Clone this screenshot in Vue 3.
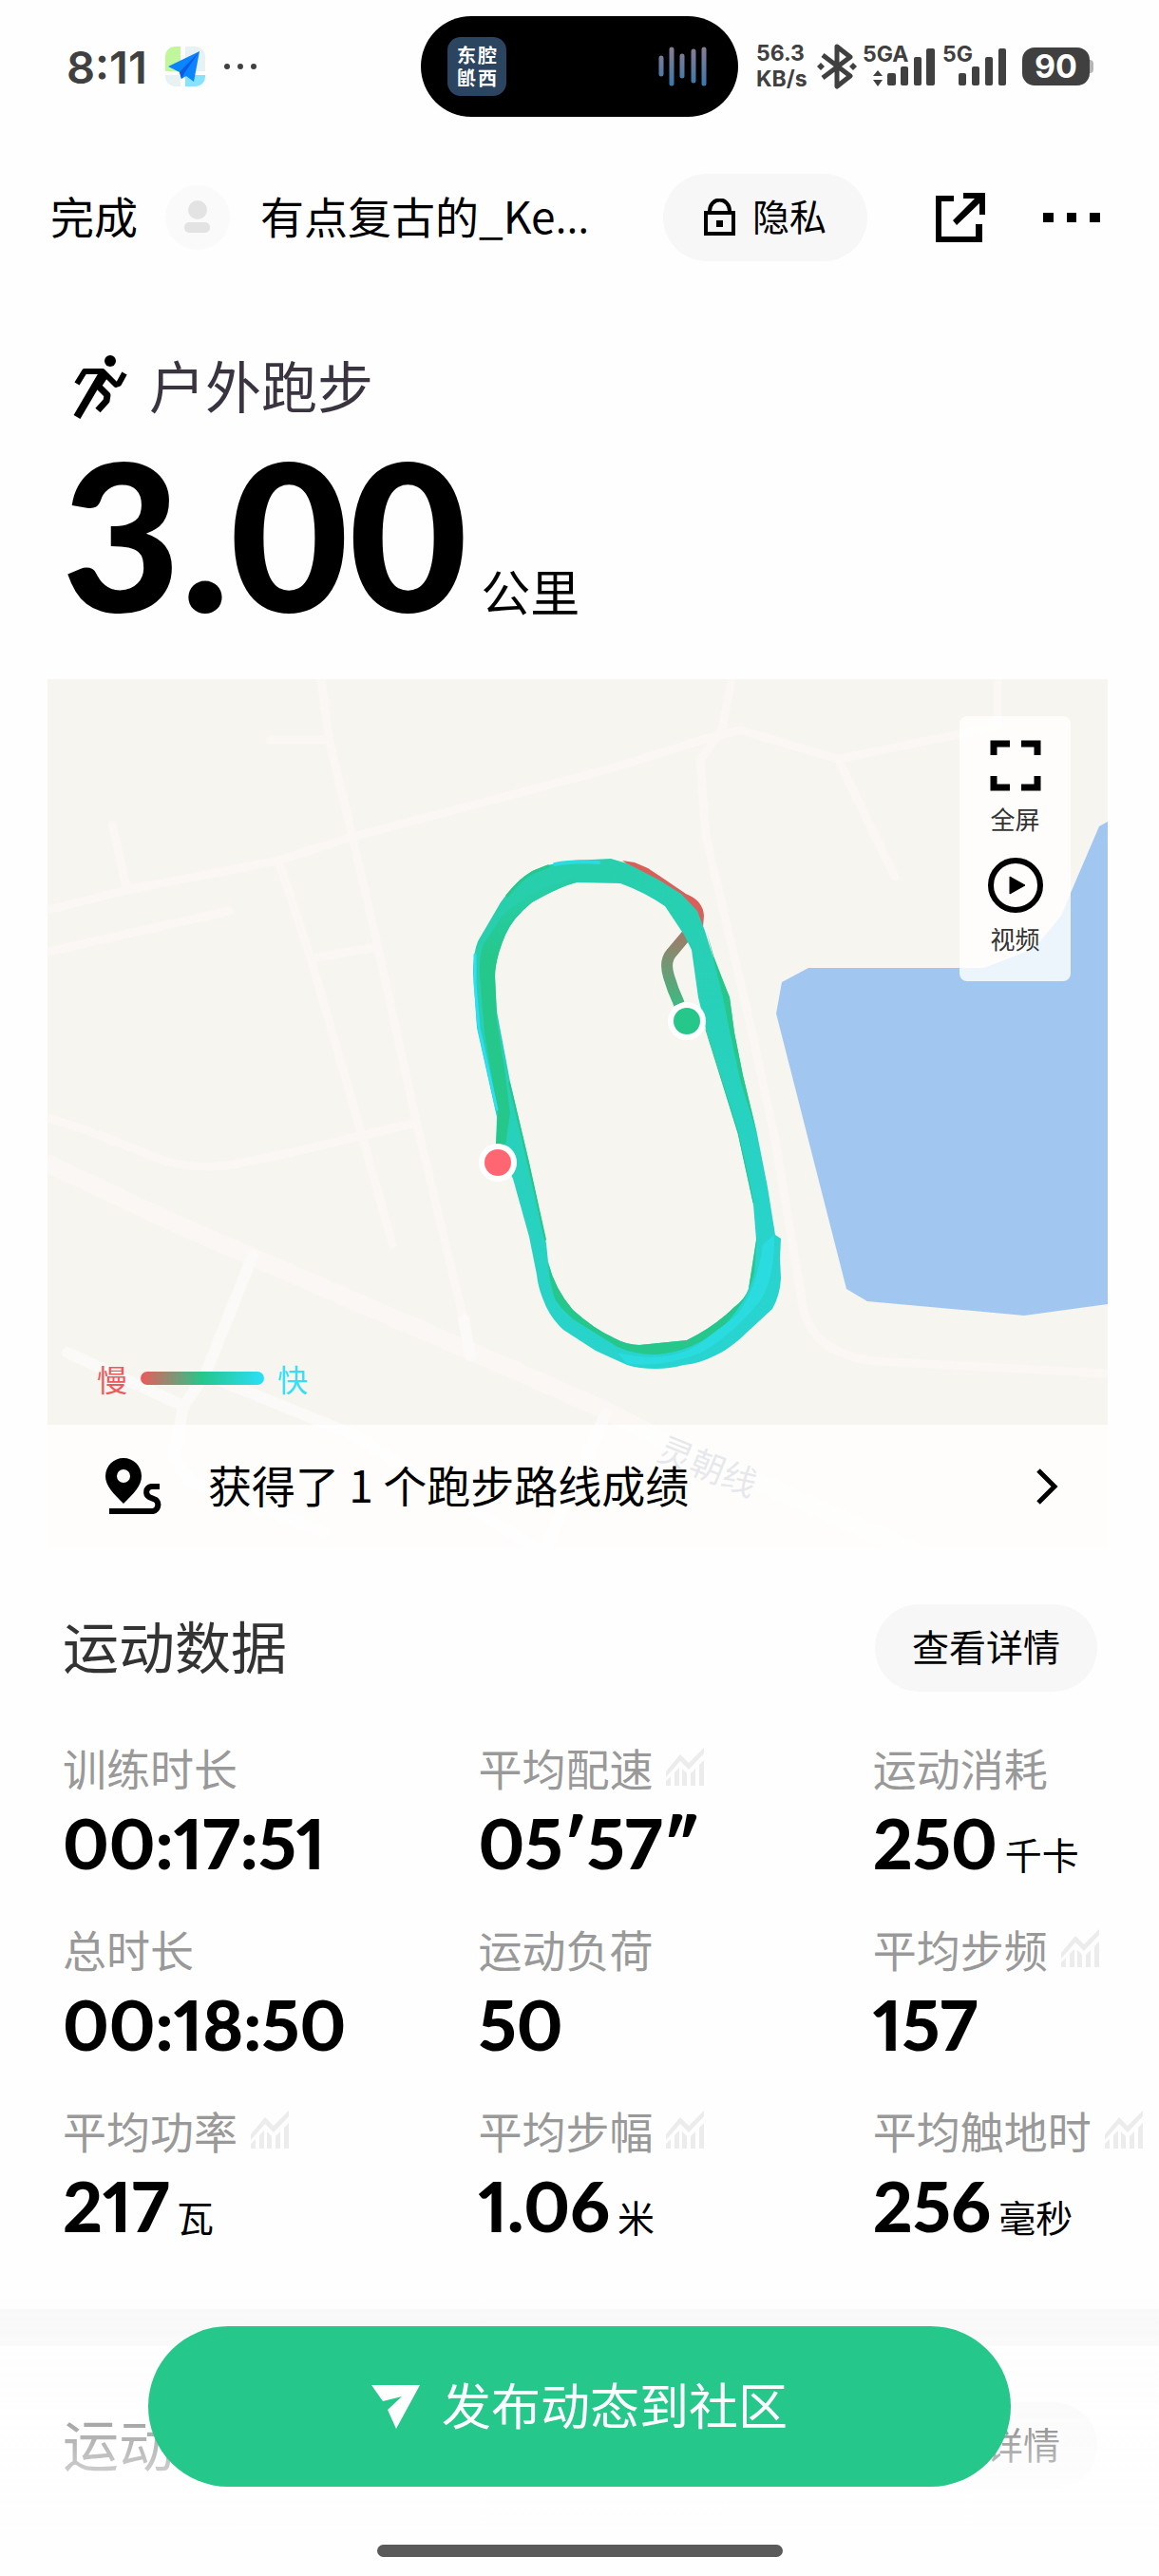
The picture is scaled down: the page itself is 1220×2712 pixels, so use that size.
<script setup>
const metrics = [
  { label: '训练时长', value: '00:17:51' },
  { label: '平均配速', value: '05′57″', chart: true },
  { label: '运动消耗', value: '250', unit: '千卡' },
  { label: '总时长', value: '00:18:50' },
  { label: '运动负荷', value: '50' },
  { label: '平均步频', value: '157', chart: true },
  { label: '平均功率', value: '217', unit: '瓦', chart: true },
  { label: '平均步幅', value: '1.06', unit: '米', chart: true },
  { label: '平均触地时', value: '256', unit: '毫秒', chart: true },
]
</script>

<template>
  <div class="page">
    <div class="status">
      <div class="status-left">
        <span class="clock">8:11</span>
        <svg class="map-app" viewBox="0 0 42 42" aria-hidden="true">
          <path d="M10 0H16V26H0V10A10 10 0 0 1 10 0Z" fill="#bff79a" />
          <path d="M21 0H32A10 10 0 0 1 42 10V26H21Z" fill="#e9f2f2" />
          <path d="M0 30H16V42H10A10 10 0 0 1 0 32Z" fill="#e9f2f2" />
          <path d="M21 30H42V32A10 10 0 0 1 32 42H21Z" fill="#86e3fb" />
          <path d="M3 21L36 5L30 37L22 31L17 34L15 27Z" fill="#0a84ff" />
          <path d="M36 5L15 27L17 34L20 28Z" fill="#0a5be0" />
        </svg>
        <svg class="dots" viewBox="0 0 34 6" aria-hidden="true">
          <g fill="#404040"><circle cx="3" cy="3" r="3" /><circle cx="17" cy="3" r="3" /><circle cx="31" cy="3" r="3" /></g>
        </svg>
      </div>
      <div class="island">
        <div class="island-app"><span>东</span><span>腔</span><span class="turned">调</span><span>西</span></div>
        <svg class="wave" viewBox="0 0 52 42" aria-hidden="true">
          <defs>
            <linearGradient id="waveFill" gradientUnits="userSpaceOnUse" x1="0" y1="0" x2="0" y2="42">
              <stop offset="0" stop-color="#8d7c93" /><stop offset="1" stop-color="#3579ac" />
            </linearGradient>
          </defs>
          <path d="M3 12V29M14 3V39M25 10V31M37 5V36M48 3V39" stroke="url(#waveFill)" stroke-width="5" stroke-linecap="round" />
        </svg>
      </div>
      <div class="status-right">
        <div class="speed"><span>56.3</span><span>KB/s</span></div>
        <svg class="bluetooth" viewBox="0 0 42 48" aria-hidden="true">
          <path d="M6 12L35 34L21 45V3L35 14L6 36" fill="none" stroke="#404040" stroke-width="5" stroke-linejoin="round" />
          <path d="M0 24L4 20L8 24L4 28ZM34 24L38 20L42 24L38 28Z" fill="#404040" />
        </svg>
        <svg class="signal wide" viewBox="0 0 78 60" aria-hidden="true">
          <text x="0" y="25">5GA</text>
          <path d="M11 40L16 34L21 40ZM11 44H21L16 51Z" />
          <rect x="26" y="37" width="9" height="13" rx="2" /><rect x="40" y="30" width="8" height="20" rx="2" />
          <rect x="54" y="20" width="8" height="30" rx="2" /><rect x="67" y="11" width="9" height="39" rx="2" />
        </svg>
        <svg class="signal" viewBox="0 0 68 60" aria-hidden="true">
          <text x="0" y="25">5G</text>
          <rect x="17" y="37" width="8" height="13" rx="2" /><rect x="31" y="30" width="8" height="20" rx="2" />
          <rect x="45" y="20" width="8" height="30" rx="2" /><rect x="59" y="11" width="8" height="39" rx="2" />
        </svg>
        <div class="battery"><span class="level">90</span><span class="nub"></span></div>
      </div>
    </div>

    <header class="topbar">
      <button class="plain" type="button">完成</button>
      <svg class="avatar" viewBox="0 0 68 68" aria-hidden="true">
        <circle cx="34" cy="34" r="34" fill="#fafafa" />
        <circle cx="34" cy="26" r="10" fill="#e3e3e3" /><rect x="20" y="39" width="27" height="11" rx="5" fill="#e3e3e3" />
      </svg>
      <span class="user">有点复古的_Ke<span class="ellipsis">…</span></span>
      <button class="pill privacy" type="button">
        <svg width="33" height="40" viewBox="0 0 33 40" aria-hidden="true">
          <path d="M2 15H31V37H2ZM6 15V13A10 11 0 0 1 27 13V15" fill="none" stroke="#000" stroke-width="4" />
          <rect x="13" y="23" width="7" height="7" />
        </svg>
        <span>隐私</span>
      </button>
      <button class="icon-button share" type="button" aria-label="分享">
        <svg width="52" height="52" viewBox="0 0 52 52">
          <path d="M0 3H19V9H6V46H42V33H49V52H0ZM29 0H52V23H46V11L22 34L18 29L41 6H29Z" />
        </svg>
      </button>
      <button class="icon-button more" type="button" aria-label="更多">
        <svg width="60" height="10" viewBox="0 0 60 10"><path d="M0 0H11V10H0ZM25 0H35V10H25ZM49 0H60V10H49Z" /></svg>
      </button>
    </header>

    <section class="summary">
      <h1 class="sport">
        <svg width="58" height="68" viewBox="0 0 58 68" aria-hidden="true">
          <circle cx="39" cy="6" r="6" />
          <g fill="none" stroke="#000">
            <path d="M4 30L12 17H31L45 31L48 30L54 19" stroke-width="6" stroke-linejoin="round" />
            <path d="M31 19L4 65" stroke-width="8" />
            <path d="M26 32L36 42L35 48L26 58" stroke-width="7" stroke-linejoin="round" />
          </g>
          <path d="M20 15H31L38 21L28 36L22 33L27 20Z" />
        </svg>
        <span>户外跑步</span>
      </h1>
      <div class="distance"><strong>3.00</strong><span>公里</span></div>
    </section>

    <section class="map">
      <svg class="canvas" viewBox="50 715 1116 915" preserveAspectRatio="xMidYMid slice" aria-hidden="true">
        <defs>
          <linearGradient id="loop" gradientUnits="userSpaceOnUse" x1="540" y1="960" x2="780" y2="1400">
            <stop offset="0" stop-color="#27cfac" /><stop offset="1" stop-color="#28d4cf" />
          </linearGradient>
          <linearGradient id="tail" gradientUnits="userSpaceOnUse" x1="723" y1="984" x2="715" y2="1060">
            <stop offset="0" stop-color="#a07a68" /><stop offset="1" stop-color="#3bbb83" />
          </linearGradient>
          <linearGradient id="leftEdge" gradientUnits="userSpaceOnUse" x1="0" y1="945" x2="0" y2="1010">
            <stop offset="0" stop-color="#27cda5" /><stop offset="1" stop-color="#25c78b" />
          </linearGradient>
        </defs>
        <rect x="50" y="715" width="1116" height="915" fill="#f7f5f0" />
        <g class="roads">
          <path d="M338 715L346 777L371 881L398 998L438 1180L488 1389" />
          <path d="M285 779H346M50 958L134 937L293 906L371 881L640 810L752 775L780 769L882 799L1010 773L1050 764V715" />
          <path d="M882 799L942 923M118 868L134 937M50 1002L241 959M293 906L327 1009L381 1195L413 1310M327 1009L398 997" />
          <path d="M50 1177L86 1188L155 1215Q190 1232 240 1227L308 1213L438 1182" />
          <path d="M770 715L760 768L737 800L743 880L790 1080L815 1195L845 1375Q855 1425 920 1433L1166 1446" />
          <path class="main" d="M50 1225L193 1292L346 1358L499 1424L640 1486L690 1512L1000 1650" />
        </g>
        <g class="lanes">
          <path d="M266 1322L216 1447L193 1481L183 1533L200 1560L341 1613M71 1424L193 1480M216 1447L371 1510L537 1613L580 1640M638 1488L574 1630M488 1389L495 1427" />
        </g>
        <path d="M823 1034L851 1019H1036L1082 1001L1095 991L1117 964L1127 940L1157 870L1166 865V1373L1078 1385L913 1370L891 1357L817 1067Z" fill="#a1c7f0" />
        <text class="road-name" transform="translate(690 1536) rotate(22)">灵朝线</text>

        <path d="M655 906L668 908L682 914L700 926L722 941Q740 948 741 964L740 976L715 945L690 930Z" fill="#d9605a" />
        <path d="M723 984L707 1003Q699 1012 704 1028Q708 1042 715 1057" fill="none" stroke="url(#tail)" stroke-width="12" />
        <path fill="url(#loop)" fill-rule="evenodd" d="M575 911L603 906L643 904L660 909L693 926L717 941L734 959L742 980L750 1006L768 1050L773 1087L782 1132L797 1194L808 1250L816 1300L822 1304L821 1324L822 1346Q821 1364 813 1378L787 1402Q770 1419 753 1427Q735 1436 720 1437Q705 1441 690 1441Q672 1441 660 1437L627 1422L593 1400Q582 1390 575 1376Q566 1356 565 1342L557 1302L540 1241L522 1205L523 1176L502 1082L498 1024Q498 1004 503 991L527 950Q543 927 560 917ZM607 929Q590 933 560 950Q540 966 532 984Q521 1010 521 1028L523 1065L537 1139L557 1224L575 1309L577 1329Q584 1357 603 1379Q625 1399 647 1409Q660 1416 673 1416L723 1411Q752 1397 773 1376Q784 1368 788 1357L796 1305L793 1268L777 1194L743 1083L735 1050L728 1000L720 984L700 954Q678 939 653 930Z" />
        <path fill="url(#leftEdge)" d="M607 929Q590 933 560 950Q540 966 532 984Q521 1010 521 1028L523 1075L531 1125L537 1172L532 1206H522L524 1172L510 1087L505 1028Q504 1008 509 994L530 962L556 943Q585 928 607 925Z" />
        <path fill="#25c78b" d="M577 1329Q584 1357 603 1379Q625 1399 647 1409Q660 1416 673 1416L723 1411Q752 1397 773 1376Q784 1368 788 1357L797 1300L794 1340Q788 1368 762 1396Q728 1424 690 1426Q668 1426 650 1418L605 1390Q586 1374 583 1364Q578 1348 577 1329Z" />
        <path fill="#2adbe0" d="M815 1300Q816 1345 800 1370Q768 1408 738 1424Q700 1440 660 1436L650 1424Q700 1436 733 1417L775 1385Q796 1360 803 1310Z" />
        <path fill="#25c78b" d="M744 981L751 1006L768 1050L773 1087L782 1132L797 1194L780 1140L768 1085L761 1050Z" />
        <g fill="none" stroke-linecap="round" stroke-linejoin="round">
          <path d="M500 1005V1035L504 1082L523 1168" stroke="#2cdff2" stroke-width="3" />
          <path d="M534 943Q548 925 562 918L577 912" stroke="#25c78b" stroke-width="3" />
          <path d="M584 910Q604 906 630 908" stroke="#2adbe0" stroke-width="4" />
          <path d="M743 1084L777 1193L793 1266" stroke="#25c78b" stroke-width="1" />
          <path d="M536 1140L556 1224L574 1305" stroke="#25c78b" stroke-width="2" />
        </g>
        <circle cx="723" cy="1075" r="20" fill="#fff" /><circle cx="723" cy="1075" r="14" fill="#25c78b" />
        <circle cx="524" cy="1224" r="20" fill="#fff" /><circle cx="524" cy="1224" r="14" fill="#ff6671" />
      </svg>

      <div class="map-tools">
        <button type="button">
          <svg width="60" height="60" viewBox="0 0 60 60" aria-hidden="true"><path d="M7 19V7H24M36 7H53V19M53 41V53H36M24 53H7V41" fill="none" stroke="#000" stroke-width="7" /></svg>
          全屏
        </button>
        <button type="button">
          <svg width="60" height="60" viewBox="0 0 60 60" aria-hidden="true"><circle cx="30" cy="30" r="26" fill="none" stroke="#000" stroke-width="6" /><path d="M24 21L40 30L24 39Z" stroke="#000" stroke-linejoin="round" /></svg>
          视频
        </button>
      </div>

      <div class="legend"><span class="slow">慢</span><i></i><span class="fast">快</span></div>

      <button class="achievement" type="button">
        <svg width="60" height="60" viewBox="0 0 60 60" aria-hidden="true">
          <path fill-rule="evenodd" d="M19 0A19 19 0 0 1 38 19C38 29 30 37 19 48C8 37 0 29 0 19A19 19 0 0 1 19 0ZM19 12A7 7 0 0 0 19 26A7 7 0 0 0 19 12Z" />
          <path d="M57 30H48A6 6 0 0 0 46 41L53 44A7 7 0 0 1 50 56H4" fill="none" stroke="#000" stroke-width="6" />
        </svg>
        <span>获得了 1 个跑步路线成绩</span>
        <svg width="24" height="40" viewBox="0 0 24 40" aria-hidden="true"><path d="M3 3L20 20L3 37" fill="none" stroke="#000" stroke-width="5" /></svg>
      </button>
    </section>

    <section>
      <div class="section-head">
        <h2>运动数据</h2>
        <button class="pill details" type="button"><span>查看详情</span></button>
      </div>
      <dl class="metrics">
        <div v-for="m in metrics" :key="m.label" class="metric">
          <dt>
            {{ m.label }}
            <svg v-if="m.chart" width="40" height="40" viewBox="0 0 40 40" aria-hidden="true">
              <path d="M0 25L15 7L24 16L40 0V6L24 23L15 14L0 31ZM0 35L5 30V40H0ZM9 26L14 21V40H9ZM17 22L22 27V40H17ZM26 27L31 22V40H26ZM35 18L40 13V40H35Z" fill="#ececec" />
            </svg>
          </dt>
          <dd><strong>{{ m.value }}</strong><span v-if="m.unit">{{ m.unit }}</span></dd>
        </div>
      </dl>
    </section>

    <div class="divider"></div>

    <section class="next">
      <div class="section-head">
        <h2>运动</h2>
        <button class="pill details" type="button"><span>查看详情</span></button>
      </div>
    </section>

    <footer class="publish-bar">
      <button class="publish" type="button">
        <svg width="52" height="46" viewBox="0 0 52 46" aria-hidden="true"><path d="M0 0H51L26 46L17 26L32 12L12 17Z" fill="#fff" /></svg>
        <span>发布动态到社区</span>
      </button>
      <div class="home-indicator"></div>
    </footer>
  </div>
</template>

<style>
body {
  margin: 0;
  background: #fefefe;
}
</style>

<style scoped>
.page {
  font-family: "Noto Sans CJK SC", sans-serif;
  color: #000;
  overflow: hidden;
}
button {
  border: 0;
  padding: 0;
  margin: 0;
  background: none;
  font: inherit;
  color: inherit;
  cursor: pointer;
}
svg {
  flex: none;
}
h1, h2, dl, dd {
  margin: 0;
  font-weight: 400;
}

/* the CJK face sits low in its line box */
.plain, .user, .pill span, .sport span, .achievement span, .section-head h2, .publish span {
  padding-bottom: 6px;
}

.status {
  display: grid;
  grid-template-columns: 1fr 334px 1fr;
  align-items: center;
  height: 140px;
  font-family: Inter, sans-serif;
  font-weight: 600;
  color: #404040;
}
.status-left {
  display: flex;
  align-items: center;
  padding-left: 70px;
}
.clock {
  width: 104px;
  font-size: 47px;
}
.map-app {
  width: 42px;
  height: 42px;
}
.dots {
  width: 34px;
  margin-left: 20px;
}
.island {
  display: flex;
  align-items: center;
  justify-content: space-between;
  height: 106px;
  padding: 0 32px 0 28px;
  border-radius: 53px;
  background: #000;
  box-sizing: border-box;
}
.island-app {
  display: grid;
  grid-template-columns: 20px 20px;
  justify-content: center;
  align-content: center;
  gap: 2px;
  width: 62px;
  height: 62px;
  border-radius: 14px;
  background: #2b4560;
  color: #fff;
  font: 700 20px/22px "Noto Sans CJK SC", sans-serif;
}
.turned {
  transform: rotate(180deg);
}
.wave {
  width: 52px;
}
.status-right {
  display: flex;
  align-items: center;
  padding-left: 19px;
}
.speed {
  display: flex;
  flex-direction: column;
  width: 64px;
  font-size: 23px;
  font-weight: 700;
  line-height: 27px;
}
.bluetooth {
  width: 42px;
}
.signal {
  width: 68px;
  margin-left: 6px;
  fill: #404040;
}
.signal.wide {
  width: 78px;
}
.signal text {
  font: 700 23px Inter, sans-serif;
}
.battery {
  display: flex;
  align-items: center;
  margin-left: 16px;
}
.level {
  width: 71px;
  border-radius: 13px;
  background: #404040;
  color: #fff;
  font-size: 34px;
  font-weight: 700;
  line-height: 40px;
  text-align: center;
}
.nub {
  width: 4px;
  height: 14px;
  border-radius: 0 4px 4px 0;
  background: #b5b5b5;
}

.topbar {
  display: flex;
  align-items: center;
  padding: 43px 62px 0 53px;
  font-size: 46px;
}
.avatar {
  width: 68px;
  margin: 0 32px 0 29px;
}
.user {
  flex: 1;
  white-space: nowrap;
}
.ellipsis {
  font-family: "Open Sans", sans-serif;
}
.pill {
  display: flex;
  align-items: center;
  justify-content: center;
  height: 92px;
  border-radius: 46px;
  background: #f7f7f7;
  font-size: 39px;
}
.privacy {
  width: 215px;
  gap: 18px;
}
.icon-button {
  display: flex;
}
.share {
  margin: 0 61px 0 72px;
}

.sport {
  display: flex;
  align-items: center;
  gap: 22px;
  margin-top: 97px;
  padding-left: 77px;
  font-size: 59px;
  line-height: 66px;
  color: #3a3340;
}
.distance {
  display: flex;
  align-items: baseline;
  gap: 14px;
  height: 271px;
  padding-left: 65px;
}
.distance strong {
  font: 900 216px/234px Lato, sans-serif;
}
.distance span {
  font-size: 52px;
  line-height: 60px;
}

.map {
  position: relative;
  margin: 0 54px 0 50px;
}
.canvas {
  display: block;
  width: 100%;
  height: 915px;
}
.roads, .lanes {
  fill: none;
  stroke: #faf7f4;
  stroke-width: 9;
  stroke-linecap: round;
  stroke-linejoin: round;
}
.roads .main {
  stroke-width: 19;
}
.lanes {
  stroke: #fbfaf8;
  stroke-width: 12;
}
.road-name {
  font-size: 36px;
  fill: #858d99;
}
.map-tools {
  position: absolute;
  top: 39px;
  right: 39px;
  display: flex;
  flex-direction: column;
  align-items: center;
  gap: 24px;
  width: 117px;
  height: 279px;
  padding-top: 22px;
  border-radius: 8px;
  background: rgba(255, 255, 255, .8);
  box-sizing: border-box;
  font-size: 26px;
  line-height: 32px;
  color: #333;
}
.map-tools button {
  display: flex;
  flex-direction: column;
  align-items: center;
  gap: 10px;
}
.legend {
  position: absolute;
  left: 52px;
  bottom: 156px;
  display: flex;
  align-items: center;
  gap: 14px;
  font-size: 32px;
  line-height: 46px;
}
.legend i {
  width: 130px;
  height: 14px;
  border-radius: 7px;
  background: linear-gradient(90deg, #ec5a5a, #25c78b 50%, #2cdff8);
}
.slow {
  color: #ec5a5a;
}
.fast {
  color: #38def5;
}
.achievement {
  position: absolute;
  left: 0;
  right: 0;
  bottom: 0;
  display: flex;
  align-items: center;
  gap: 48px;
  height: 130px;
  padding: 0 52px 0 61px;
  background: rgba(255, 255, 255, .8);
  font-size: 46px;
}
.achievement span {
  flex: 1;
  text-align: left;
}

.section-head {
  display: flex;
  align-items: center;
  justify-content: space-between;
  padding: 59px 65px 0 66px;
}
.section-head h2 {
  font-size: 59px;
  line-height: 72px;
  color: #333;
}
.details {
  width: 234px;
}
.metrics {
  display: grid;
  grid-template-columns: 437fr 415fr 301fr;
  row-gap: 49px;
  margin-top: 52px;
  padding-left: 66px;
}
.metric {
  min-width: 0;
  white-space: nowrap;
}
.metric dt {
  display: flex;
  align-items: center;
  gap: 14px;
  font-size: 46px;
  line-height: 54px;
  color: #999;
}
.metric dd {
  display: flex;
  align-items: baseline;
  gap: 8px;
  height: 76px;
  margin-top: 12px;
}
.metric strong {
  font: 900 73px/82px Lato, sans-serif;
  font-variant-numeric: proportional-nums;
}
.metric dd span {
  font-size: 39px;
  line-height: 48px;
}
.divider {
  height: 39px;
  margin-top: 74px;
  background: #f8f8f8;
}
.next {
  padding-bottom: 91px;
}

.publish-bar {
  position: fixed;
  left: 0;
  right: 0;
  bottom: 0;
  padding: 59px 156px 20px;
  background: linear-gradient(rgba(254, 254, 254, 0), #fefefe 280px);
}
.publish {
  display: flex;
  align-items: center;
  justify-content: center;
  gap: 22px;
  width: 100%;
  height: 169px;
  border-radius: 85px;
  background: #26c78b;
  color: #fff;
  font-size: 52px;
}
.home-indicator {
  width: 427px;
  height: 13px;
  margin: 61px auto 0;
  border-radius: 7px;
  background: #5a5a5a;
}
</style>
